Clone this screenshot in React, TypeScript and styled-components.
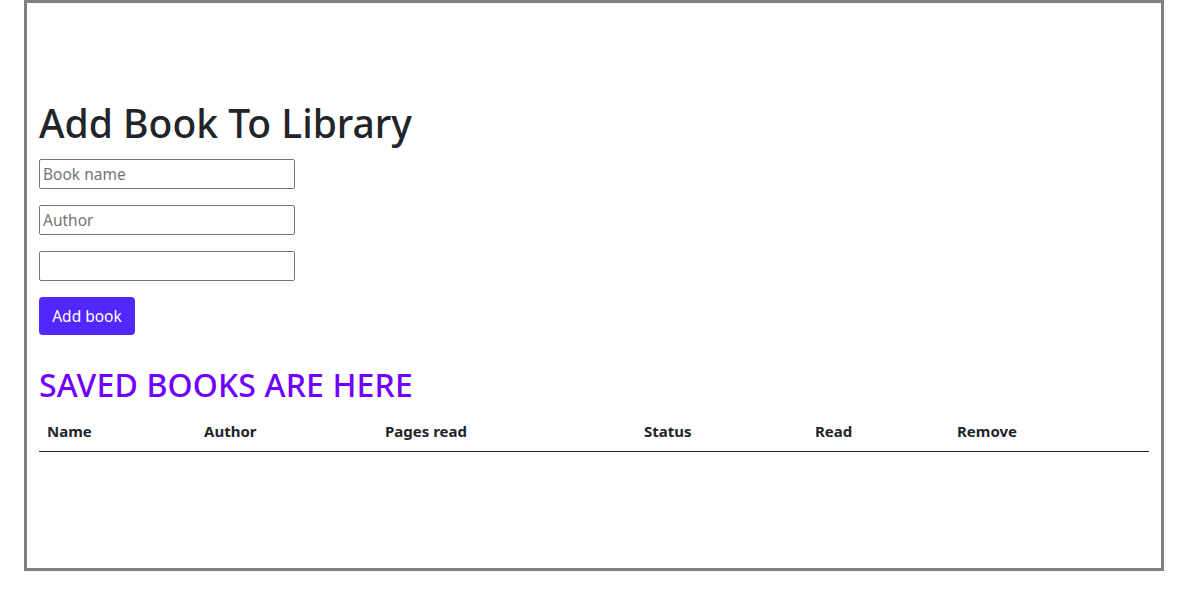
import React from "react";
import styled, { createGlobalStyle } from "styled-components";

const Global = createGlobalStyle`
  html, body { margin: 0; padding: 0; background: #fff; }
  body { font-family: "Noto Sans", "Open Sans", sans-serif; color: #212529; }
`;

const Frame = styled.div`
  box-sizing: border-box;
  width: 1140px;
  height: 571px;
  margin-left: 24px;
  border: 3px solid #808080;
  padding: 97px 12px 0 12px;
`;

const Title = styled.h1`
  margin: 0 0 13px 0;
  font-size: 39px;
  font-weight: 500;
  line-height: 46px;
  color: #212529;
`;

const Form = styled.form`
  display: flex;
  flex-direction: column;
  align-items: flex-start;
  gap: 16px;
`;

const Field = styled.input`
  box-sizing: border-box;
  width: 256px;
  height: 30px;
  margin: 0;
  border: 1px solid #767676;
  border-radius: 2px;
  padding: 0 3px;
  font-family: inherit;
  font-size: 15.5px;
  color: #212529;
  &::placeholder { color: #757575; }
`;

const Button = styled.button`
  box-sizing: border-box;
  width: 96px;
  height: 38px;
  padding: 0;
  border: none;
  border-radius: 4px;
  background: #5127ff;
  color: #fff;
  font-family: inherit;
  font-size: 15.5px;
`;

const Subtitle = styled.h2`
  margin: 32px 0 10px 0;
  font-size: 32px;
  font-weight: 500;
  line-height: 36px;
  letter-spacing: 0.15px;
  color: #6f00ff;
`;

const Table = styled.table`
  width: 1110px;
  border-collapse: collapse;
  table-layout: fixed;
`;

const Th = styled.th<{ $w: number }>`
  box-sizing: border-box;
  width: ${(p) => p.$w}px;
  text-align: left;
  padding: 8px 8px 10px 8px;
  font-size: 15px;
  font-weight: 700;
  color: #212529;
  border-bottom: 1px solid #212529;
`;

const cols: [string, number][] = [
  ["Name", 157],
  ["Author", 181],
  ["Pages read", 259],
  ["Status", 171],
  ["Read", 142],
  ["Remove", 200],
];

export default function App() {
  return (
    <>
      <Global />
      <Frame>
        <Title>Add Book To Library</Title>
        <Form onSubmit={(e) => e.preventDefault()}>
          <Field placeholder="Book name" />
          <Field placeholder="Author" />
          <Field type="number" />
          <Button type="submit">Add book</Button>
        </Form>
        <Subtitle>SAVED BOOKS ARE HERE</Subtitle>
        <Table>
          <thead>
            <tr>
              {cols.map(([c, w]) => (
                <Th key={c} $w={w}>{c}</Th>
              ))}
            </tr>
          </thead>
          <tbody />
        </Table>
      </Frame>
    </>
  );
}
